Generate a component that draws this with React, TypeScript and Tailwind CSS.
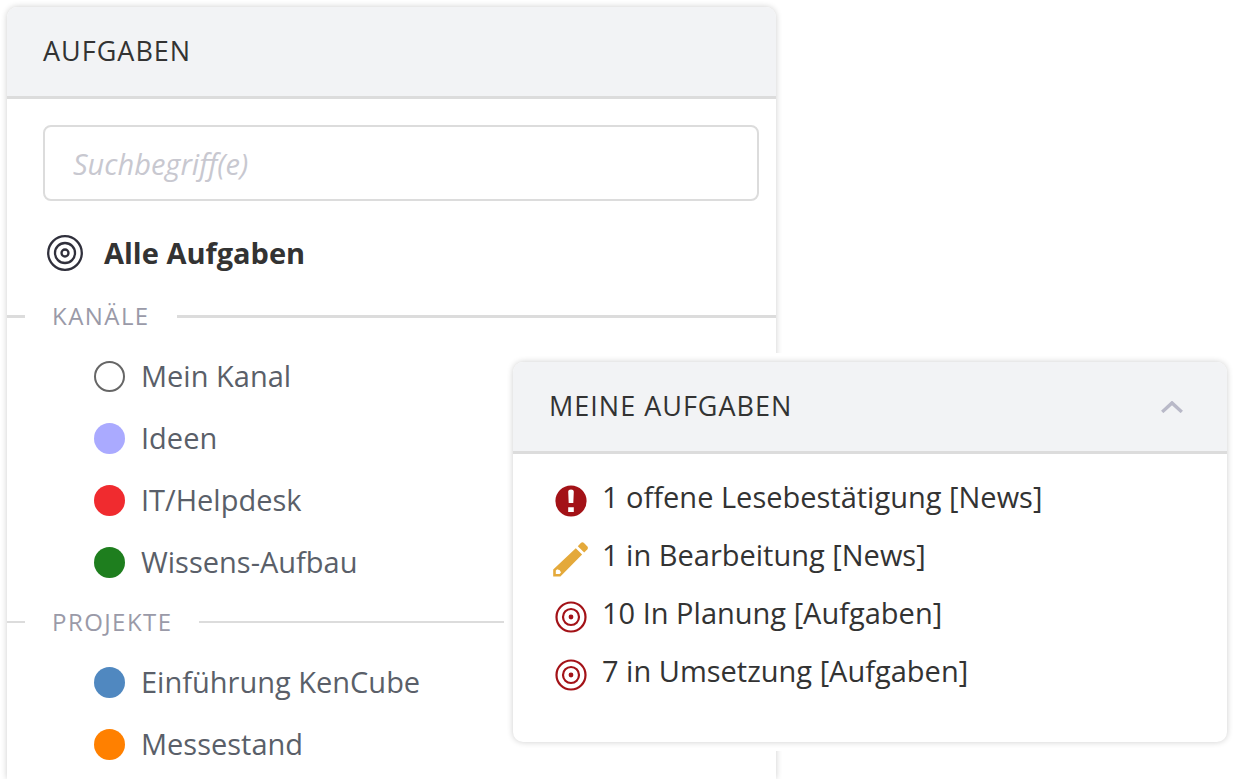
import { useState } from 'react';

interface Entry {
  label: string;
  dot: string;
}

interface Section {
  title: string;
  line: string;
  entries: Entry[];
}

const SECTIONS: Section[] = [
  {
    title: 'Kanäle',
    line: 'h-[3px]',
    entries: [
      { label: 'Mein Kanal', dot: 'border-2 border-[#666666] bg-white' },
      { label: 'Ideen', dot: 'bg-[#aaaaff]' },
      { label: 'IT/Helpdesk', dot: 'bg-[#f02b2f]' },
      { label: 'Wissens-Aufbau', dot: 'bg-[#1e7e1e]' },
    ],
  },
  {
    title: 'Projekte',
    line: 'h-[2px]',
    entries: [
      { label: 'Einführung KenCube', dot: 'bg-[#5088c0]' },
      { label: 'Messestand', dot: 'bg-[#ff8000]' },
    ],
  },
];

const TASKS = [
  { label: '1 offene Lesebestätigung [News]', icon: <AlertIcon /> },
  { label: '1 in Bearbeitung [News]', icon: <PencilIcon /> },
  { label: '10 In Planung [Aufgaben]', icon: <TargetIcon /> },
  { label: '7 in Umsetzung [Aufgaben]', icon: <TargetIcon /> },
];

function AlertIcon() {
  return (
    <svg className="size-9 text-[#a31217]" viewBox="0 0 36 36" aria-hidden="true">
      <circle cx="18" cy="18" r="15.6" fill="currentColor" />
      <path d="M15.2 8.4q0-1.8 2.8-1.8t2.8 1.8l-.5 11.6h-4.6zM15.2 24.2h5.6v4.8h-5.6z" fill="#fff" />
    </svg>
  );
}

function PencilIcon() {
  return (
    <svg className="size-9 text-[#e4a93a]" viewBox="0 0 36 36" fill="currentColor" aria-hidden="true">
      <path
        fillRule="evenodd"
        d="M22.8 7.2l6.3 6.3L7.4 35.6H.2v-7.2zM2.8 29.6v3.4h3.8l1.4-1.4-1.2-2.4-2.6-1z"
      />
      <path d="M24.8 5.2l3-3.2q1.6-1.4 3.2 0l3.4 3.4q1.2 1.4 0 2.9l-3.2 3.2z" />
    </svg>
  );
}

function TargetIcon() {
  return (
    <svg className="size-9 text-[#a31217]" viewBox="0 0 36 36" fill="none" stroke="currentColor" strokeWidth="2.2" aria-hidden="true">
      <circle cx="18" cy="18" r="14.5" />
      <circle cx="18" cy="18" r="8" />
      <circle cx="18" cy="18" r="2.4" fill="currentColor" stroke="none" />
    </svg>
  );
}

function SectionBlock({ section }: { section: Section }) {
  return (
    <section>
      <div className="flex h-[58px] items-center gap-[27px]">
        <span className={`w-[18px] bg-[#dcdcdc] ${section.line}`} />
        <h3 className="text-[24px] tracking-[0.06em] text-[#9a9aa8] uppercase">{section.title}</h3>
        <span className={`flex-1 bg-[#dcdcdc] ${section.line}`} />
      </div>
      <ul>
        {section.entries.map((entry) => (
          <li key={entry.label}>
            <a href="#" className="flex h-[62px] items-center gap-4 pl-[87px] text-[29px] text-[#5a5f69]">
              <span className={`size-[31px] shrink-0 rounded-full ${entry.dot}`} />
              {entry.label}
            </a>
          </li>
        ))}
      </ul>
    </section>
  );
}

function TaskNavigation() {
  return (
    <nav className="w-[63%] flex-1 rounded-t-[10px] bg-white shadow-[0_0_6px_rgba(0,0,0,0.2)]">
      <header className="flex h-[92px] items-center rounded-t-[10px] border-b-3 border-[#dcdcdc] bg-[#f2f3f5] px-9">
        <h2 className="text-[27px] tracking-[1px] uppercase">Aufgaben</h2>
      </header>
      <div className="pt-[26px] pr-[17px] pl-9">
        <input
          type="search"
          aria-label="Suchbegriff(e)"
          placeholder="Suchbegriff(e)"
          className="h-[76px] w-full rounded-lg border-2 border-[#dcdcdc] bg-white px-7 text-[29px] placeholder:text-[#c8c8d0] placeholder:italic"
        />
      </div>
      <a href="#" className="mt-[18px] flex h-[68px] items-center gap-[21px] pl-10 text-[29px] font-bold">
        <svg className="size-9 text-[#30303c]" viewBox="0 0 36 36" fill="none" stroke="currentColor" strokeWidth="2.3" aria-hidden="true">
          <circle cx="18" cy="18" r="16.8" />
          <circle cx="18" cy="18" r="10" />
          <circle cx="18" cy="18" r="3.5" />
        </svg>
        Alle Aufgaben
      </a>
      {SECTIONS.map((section) => (
        <SectionBlock key={section.title} section={section} />
      ))}
    </nav>
  );
}

function MyTasks() {
  const [open, setOpen] = useState(true);

  return (
    <aside className="absolute top-[353px] right-0 left-[504px] bg-white py-[9px] pr-[7px] pl-[9px]">
      <div className="rounded-[10px] bg-white shadow-[0_0_6px_rgba(0,0,0,0.2)]">
        <header className="flex h-[92px] items-center justify-between rounded-t-[10px] border-b-3 border-[#dcdcdc] bg-[#f2f3f5] px-9">
          <h2 className="text-[27px] tracking-[1px] uppercase">Meine Aufgaben</h2>
          <button
            type="button"
            aria-label="Meine Aufgaben umschalten"
            aria-expanded={open}
            onClick={() => setOpen(!open)}
            className="px-2 py-3"
          >
            <svg className="h-3 w-[22px] text-[#b9b9c8]" viewBox="0 0 22 12" fill="none" stroke="currentColor" strokeWidth="3.4" aria-hidden="true">
              <path d="M1.2 10.9L11 1.9l9.8 9" />
            </svg>
          </button>
        </header>
        {open && (
          <ul className="pt-[14px] pb-[42px]">
            {TASKS.map((task) => (
              <li key={task.label}>
                <a href="#" className="flex h-[58px] items-center gap-[13px] pl-10 text-[29px]">
                  <span className="shrink-0 pt-2">{task.icon}</span>
                  {task.label}
                </a>
              </li>
            ))}
          </ul>
        )}
      </div>
    </aside>
  );
}

export default function App() {
  return (
    <main className="relative flex h-screen flex-col overflow-hidden bg-white px-[7px] pt-[7px] font-['Open_Sans','Noto_Sans',sans-serif] text-[#333333]">
      <TaskNavigation />
      <MyTasks />
    </main>
  );
}
